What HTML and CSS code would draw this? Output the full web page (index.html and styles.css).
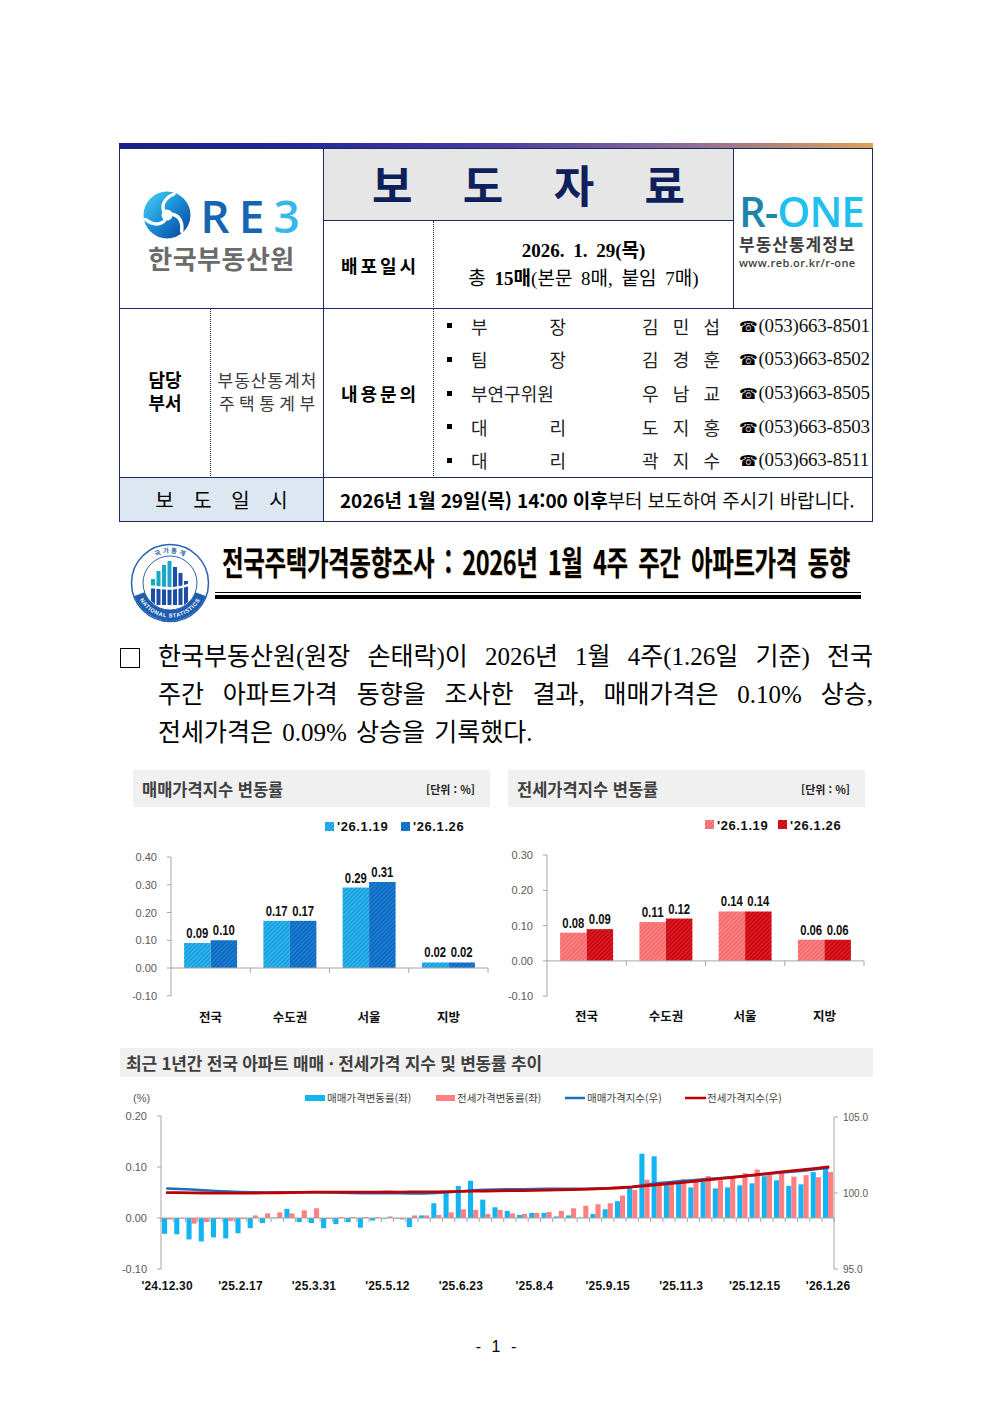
FILE: index.html
```html
<!DOCTYPE html>
<html lang="ko">
<head>
<meta charset="utf-8">
<title>보도자료 - 전국주택가격동향조사</title>
<link rel="stylesheet" href="styles.css">
</head>
<body>
<main class="page">

  <section class="release-head">
    <div class="head-bar"></div>
    <div class="head-grid">
      <div class="cell c-reb">
        <div class="reb-top">
          <svg class="reb-icon" viewBox="0 0 48 48" width="48" height="48" aria-hidden="true">
            <defs>
              <linearGradient id="reb-g" x1="0" y1="0" x2="1" y2="1">
                <stop offset="0" stop-color="#4fd3f4"/>
                <stop offset="0.45" stop-color="#1b93d8"/>
                <stop offset="1" stop-color="#0a3a94"/>
              </linearGradient>
            </defs>
            <circle cx="24" cy="24" r="23.5" fill="url(#reb-g)"/>
            <g fill="none" stroke="#fff" stroke-width="3.4" stroke-linecap="round">
              <path d="M24 24 C17 18 19 8 31 3"/>
              <path d="M24 24 C17 18 19 8 31 3" transform="rotate(120 24 24)"/>
              <path d="M24 24 C17 18 19 8 31 3" transform="rotate(240 24 24)"/>
            </g>
            <circle cx="24" cy="24" r="5.5" fill="#fff"/>
          </svg>
          <span class="reb-word"><span class="reb-dark">RE</span><span class="reb-light">3</span></span>
        </div>
        <div class="reb-name">한국부동산원</div>
      </div>

      <div class="cell c-title">보 도 자 료</div>

      <div class="cell c-rone">
        <div class="rone-word"><span class="rone-dark">R-</span><span class="rone-light">ONE</span></div>
        <div class="rone-name">부동산통계정보</div>
        <div class="rone-url">www.reb.or.kr/r-one</div>
      </div>

      <div class="cell c-label c-dist">배포일시</div>
      <div class="cell c-date">
        <div class="date-line"><b>2026. 1. 29(목)</b></div>
        <div class="date-line">총 <b>15매</b>(본문 8매, 붙임 7매)</div>
      </div>

      <div class="cell c-deptlabel">담당<br>부서</div>
      <div class="cell c-dept"><span class="dept1">부동산통계처</span><span class="dept2">주택통계부</span></div>
      <div class="cell c-label c-inq">내용문의</div>
      <div class="cell c-contacts">
        <div class="contact"><span class="dot"></span><span class="role">부 장</span><span class="name">김 민 섭</span><span class="phone"><span class="tel">☎</span>(053)663-8501</span></div>
        <div class="contact"><span class="dot"></span><span class="role">팀 장</span><span class="name">김 경 훈</span><span class="phone"><span class="tel">☎</span>(053)663-8502</span></div>
        <div class="contact"><span class="dot"></span><span class="role">부연구위원</span><span class="name">우 남 교</span><span class="phone"><span class="tel">☎</span>(053)663-8505</span></div>
        <div class="contact"><span class="dot"></span><span class="role">대 리</span><span class="name">도 지 홍</span><span class="phone"><span class="tel">☎</span>(053)663-8503</span></div>
        <div class="contact"><span class="dot"></span><span class="role">대 리</span><span class="name">곽 지 수</span><span class="phone"><span class="tel">☎</span>(053)663-8511</span></div>
      </div>

      <div class="cell c-rlabel">보 도 일 시</div>
      <div class="cell c-rtext"><b>2026년 1월 29일(목) 14:00 이후</b>부터 보도하여 주시기 바랍니다.</div>
    </div>
  </section>

  <section class="title-row">
    <svg class="emblem" viewBox="0 0 80 80" width="80" height="80" aria-hidden="true">
      <defs>
        <path id="em-top" d="M11.81 29.74 A30 30 0 0 1 68.19 29.74"/>
        <path id="em-bot" d="M6.68 48.93 A34.5 34.5 0 0 0 73.32 48.93"/>
        <clipPath id="em-clip"><circle cx="40" cy="40" r="26"/></clipPath>
      </defs>
      <circle cx="40" cy="40" r="38.5" fill="#fff" stroke="#2a64b0" stroke-width="1.5"/>
      <path d="M75.7 53 A38 38 0 0 1 4.3 53 L14.6 49.2 A27 27 0 0 0 65.4 49.2 Z" fill="#1f5db0"/>
      <circle cx="40" cy="40" r="27" fill="none" stroke="#2a64b0" stroke-width="1"/>
      <text class="em-ko"><textPath href="#em-top" startOffset="50%" text-anchor="middle">국 가 통 계</textPath></text>
      <text class="em-en"><textPath href="#em-bot" startOffset="50%" text-anchor="middle">NATIONAL STATISTICS</textPath></text>
      <g clip-path="url(#em-clip)">
        <g fill="#18a8c6">
          <rect x="21" y="36" width="4" height="10"/>
          <rect x="26.5" y="28" width="4" height="18"/>
          <rect x="32" y="22" width="4" height="24"/>
          <rect x="37.5" y="18" width="4" height="28"/>
        </g>
        <g fill="#1d4ea6">
          <rect x="21" y="46" width="4" height="16"/>
          <rect x="26.5" y="46" width="4" height="16"/>
          <rect x="32" y="46" width="4" height="16"/>
          <rect x="37.5" y="46" width="4" height="16"/>
          <rect x="43" y="24" width="4" height="38"/>
          <rect x="48.5" y="30" width="4" height="32"/>
          <rect x="54" y="38" width="4" height="24"/>
        </g>
        <path d="M12 46 C24 38 34 54 68 38" fill="none" stroke="#fff" stroke-width="2.6"/>
      </g>
    </svg>
    <div class="title-col">
      <h1 class="title-text">전국주택가격동향조사 : 2026년 1월 4주 주간 아파트가격 동향</h1>
      <div class="rule-thin"></div>
      <div class="rule-thick"></div>
    </div>
  </section>

  <section class="lead">
    <span class="lead-box"></span>
    <p class="lead-text">
      <span class="ln">한국부동산원(원장 손태락)이 2026년 1월 4주(1.26일 기준) 전국</span>
      <span class="ln">주간 아파트가격 동향을 조사한 결과, 매매가격은 0.10% 상승,</span>
      <span class="ln last">전세가격은 0.09% 상승을 기록했다.</span>
    </p>
  </section>

  <section class="charts">
    <figure class="chart">
      <div class="chart-head"><span class="chart-title">매매가격지수 변동률</span><span class="chart-unit">[단위 : %]</span></div>
      <svg class="chart-plot" viewBox="0 0 357 225" width="357" height="225">
        <defs>
          <pattern id="h-sa" width="3" height="3" patternUnits="userSpaceOnUse" patternTransform="rotate(45)">
            <rect width="3" height="3" fill="#16a2e0"/><rect width="1" height="3" fill="#3fb8ec"/>
          </pattern>
          <pattern id="h-sb" width="3" height="3" patternUnits="userSpaceOnUse" patternTransform="rotate(45)">
            <rect width="3" height="3" fill="#0b6bc3"/><rect width="1" height="3" fill="#2a83d4"/>
          </pattern>
        </defs>
        <rect x="192" y="15" width="9" height="9" fill="url(#h-sa)"/>
        <text class="lg" x="204" y="24">'26.1.19</text>
        <rect x="268" y="15" width="9" height="9" fill="url(#h-sb)"/>
        <text class="lg" x="280" y="24">'26.1.26</text>

        <g class="yl">
          <text x="24" y="54">0.40</text>
          <text x="24" y="81.75">0.30</text>
          <text x="24" y="109.5">0.20</text>
          <text x="24" y="137.25">0.10</text>
          <text x="24" y="165">0.00</text>
          <text x="24" y="192.75">-0.10</text>
        </g>
        <g class="ax">
          <line x1="38" y1="50" x2="38" y2="189"/>
          <line x1="34" y1="50" x2="38" y2="50"/>
          <line x1="34" y1="77.75" x2="38" y2="77.75"/>
          <line x1="34" y1="105.5" x2="38" y2="105.5"/>
          <line x1="34" y1="133.25" x2="38" y2="133.25"/>
          <line x1="34" y1="161" x2="38" y2="161"/>
          <line x1="34" y1="188.75" x2="38" y2="188.75"/>
        </g>

        <rect x="51.1" y="136.02" width="26.5" height="24.98" fill="url(#h-sa)"/>
        <rect x="77.6" y="133.25" width="26.5" height="27.75" fill="url(#h-sb)"/>
        <rect x="130.4" y="113.83" width="26.5" height="47.17" fill="url(#h-sa)"/>
        <rect x="156.9" y="113.83" width="26.5" height="47.17" fill="url(#h-sb)"/>
        <rect x="209.6" y="80.53" width="26.5" height="80.47" fill="url(#h-sa)"/>
        <rect x="236.1" y="74.98" width="26.5" height="86.02" fill="url(#h-sb)"/>
        <rect x="288.9" y="155.45" width="26.5" height="5.55" fill="url(#h-sa)"/>
        <rect x="315.4" y="155.45" width="26.5" height="5.55" fill="url(#h-sb)"/>

        <g class="ax">
          <line x1="38" y1="161" x2="355" y2="161"/>
          <line x1="117.25" y1="161" x2="117.25" y2="166"/>
          <line x1="196.5" y1="161" x2="196.5" y2="166"/>
          <line x1="275.75" y1="161" x2="275.75" y2="166"/>
          <line x1="355" y1="161" x2="355" y2="166"/>
        </g>

        <g class="vl">
          <text x="64.35" y="131" textLength="22" lengthAdjust="spacingAndGlyphs">0.09</text>
          <text x="90.85" y="128.25" textLength="22" lengthAdjust="spacingAndGlyphs">0.10</text>
          <text x="143.65" y="108.8" textLength="22" lengthAdjust="spacingAndGlyphs">0.17</text>
          <text x="170.15" y="108.8" textLength="22" lengthAdjust="spacingAndGlyphs">0.17</text>
          <text x="222.85" y="75.5" textLength="22" lengthAdjust="spacingAndGlyphs">0.29</text>
          <text x="249.35" y="70" textLength="22" lengthAdjust="spacingAndGlyphs">0.31</text>
          <text x="302.15" y="150.45" textLength="22" lengthAdjust="spacingAndGlyphs">0.02</text>
          <text x="328.65" y="150.45" textLength="22" lengthAdjust="spacingAndGlyphs">0.02</text>
        </g>
        <g class="cl">
          <text x="77.6" y="215">전국</text>
          <text x="156.9" y="215">수도권</text>
          <text x="236.1" y="215">서울</text>
          <text x="315.4" y="215">지방</text>
        </g>
      </svg>
    </figure>

    <figure class="chart">
      <div class="chart-head"><span class="chart-title">전세가격지수 변동률</span><span class="chart-unit">[단위 : %]</span></div>
      <svg class="chart-plot" viewBox="0 0 357 225" width="357" height="225">
        <defs>
          <pattern id="h-ja" width="3" height="3" patternUnits="userSpaceOnUse" patternTransform="rotate(45)">
            <rect width="3" height="3" fill="#f5696b"/><rect width="1" height="3" fill="#fb8f90"/>
          </pattern>
          <pattern id="h-jb" width="3" height="3" patternUnits="userSpaceOnUse" patternTransform="rotate(45)">
            <rect width="3" height="3" fill="#cc0610"/><rect width="1" height="3" fill="#dc2a30"/>
          </pattern>
        </defs>
        <rect x="197" y="13" width="9" height="9" fill="url(#h-ja)"/>
        <text class="lg" x="209" y="23">'26.1.19</text>
        <rect x="270" y="13" width="9" height="9" fill="url(#h-jb)"/>
        <text class="lg" x="282" y="23">'26.1.26</text>

        <g class="yl">
          <text x="25" y="52">0.30</text>
          <text x="25" y="87.3">0.20</text>
          <text x="25" y="122.6">0.10</text>
          <text x="25" y="157.9">0.00</text>
          <text x="25" y="193.2">-0.10</text>
        </g>
        <g class="ax">
          <line x1="39" y1="48" x2="39" y2="189.2"/>
          <line x1="35" y1="48" x2="39" y2="48"/>
          <line x1="35" y1="83.3" x2="39" y2="83.3"/>
          <line x1="35" y1="118.6" x2="39" y2="118.6"/>
          <line x1="35" y1="153.9" x2="39" y2="153.9"/>
          <line x1="35" y1="189.2" x2="39" y2="189.2"/>
        </g>

        <rect x="52.1" y="125.66" width="26.5" height="28.24" fill="url(#h-ja)"/>
        <rect x="78.6" y="122.13" width="26.5" height="31.77" fill="url(#h-jb)"/>
        <rect x="131.4" y="115.07" width="26.5" height="38.83" fill="url(#h-ja)"/>
        <rect x="157.9" y="111.54" width="26.5" height="42.36" fill="url(#h-jb)"/>
        <rect x="210.6" y="104.48" width="26.5" height="49.42" fill="url(#h-ja)"/>
        <rect x="237.1" y="104.48" width="26.5" height="49.42" fill="url(#h-jb)"/>
        <rect x="289.9" y="132.72" width="26.5" height="21.18" fill="url(#h-ja)"/>
        <rect x="316.4" y="132.72" width="26.5" height="21.18" fill="url(#h-jb)"/>

        <g class="ax">
          <line x1="39" y1="153.9" x2="356" y2="153.9"/>
          <line x1="118.25" y1="153.9" x2="118.25" y2="158.9"/>
          <line x1="197.5" y1="153.9" x2="197.5" y2="158.9"/>
          <line x1="276.75" y1="153.9" x2="276.75" y2="158.9"/>
          <line x1="356" y1="153.9" x2="356" y2="158.9"/>
        </g>

        <g class="vl">
          <text x="65.35" y="120.66" textLength="22" lengthAdjust="spacingAndGlyphs">0.08</text>
          <text x="91.85" y="117.13" textLength="22" lengthAdjust="spacingAndGlyphs">0.09</text>
          <text x="144.65" y="110.07" textLength="22" lengthAdjust="spacingAndGlyphs">0.11</text>
          <text x="171.15" y="106.54" textLength="22" lengthAdjust="spacingAndGlyphs">0.12</text>
          <text x="223.85" y="99.48" textLength="22" lengthAdjust="spacingAndGlyphs">0.14</text>
          <text x="250.35" y="99.48" textLength="22" lengthAdjust="spacingAndGlyphs">0.14</text>
          <text x="303.15" y="127.72" textLength="22" lengthAdjust="spacingAndGlyphs">0.06</text>
          <text x="329.65" y="127.72" textLength="22" lengthAdjust="spacingAndGlyphs">0.06</text>
        </g>
        <g class="cl">
          <text x="78.6" y="214">전국</text>
          <text x="157.9" y="214">수도권</text>
          <text x="237.1" y="214">서울</text>
          <text x="316.4" y="214">지방</text>
        </g>
      </svg>
    </figure>
  </section>

  <section class="trend">
    <div class="trend-head">최근 1년간 전국 아파트 매매 · 전세가격 지수 및 변동률 추이</div>
    <svg id="trend-plot" class="trend-plot" viewBox="0 0 753 223" width="753" height="223">
      <g class="tl">
        <rect x="185" y="18" width="20" height="6" fill="#12b4f2"/>
        <text x="207" y="25">매매가격변동률(좌)</text>
        <rect x="316" y="18" width="19" height="6" fill="#ff7f82"/>
        <text x="337" y="25">전세가격변동률(좌)</text>
        <line x1="445" y1="21" x2="465" y2="21" stroke="#1a6fc0" stroke-width="2.5"/>
        <text x="467" y="25">매매가격지수(우)</text>
        <line x1="565" y1="21" x2="586" y2="21" stroke="#c00000" stroke-width="2.5"/>
        <text x="587" y="25">전세가격지수(우)</text>
      </g>
      <text class="tyl-l" x="13" y="25">(%)</text>
      <g class="tyl-l end">
        <text x="27" y="43">0.20</text>
        <text x="27" y="94">0.10</text>
        <text x="27" y="145">0.00</text>
        <text x="27" y="196">-0.10</text>
      </g>
      <g class="tyl-r">
        <text x="723" y="44">105.0</text>
        <text x="723" y="120">100.0</text>
        <text x="723" y="196">95.0</text>
      </g>
      <g class="ax">
        <line x1="41" y1="39" x2="41" y2="192"/>
        <line x1="37" y1="39" x2="41" y2="39"/>
        <line x1="37" y1="90" x2="41" y2="90"/>
        <line x1="37" y1="141" x2="41" y2="141"/>
        <line x1="37" y1="192" x2="41" y2="192"/>
        <line x1="714" y1="40" x2="714" y2="192"/>
        <line x1="714" y1="40" x2="718" y2="40"/>
        <line x1="714" y1="116" x2="718" y2="116"/>
        <line x1="714" y1="192" x2="718" y2="192"/>
      </g>
      <g class="t-bars"></g>
      <g class="ax t-ticks"></g>
      <g class="t-lines"></g>
      <g class="txl">
        <text x="47.12" y="213">'24.12.30</text>
        <text x="120.56" y="213">'25.2.17</text>
        <text x="194" y="213">'25.3.31</text>
        <text x="267.44" y="213">'25.5.12</text>
        <text x="340.88" y="213">'25.6.23</text>
        <text x="414.32" y="213">'25.8.4</text>
        <text x="487.76" y="213">'25.9.15</text>
        <text x="561.2" y="213">'25.11.3</text>
        <text x="634.64" y="213">'25.12.15</text>
        <text x="708.08" y="213">'26.1.26</text>
      </g>
    </svg>
  </section>

  <footer class="pageno">- 1 -</footer>
</main>
<script src="script.js"></script>
</body>
</html>
```

FILE: styles.css
```css
* { box-sizing: border-box; margin: 0; padding: 0; }
html, body { background: #fff; }
body { font-family: "Noto Sans CJK KR", sans-serif; color: #000; }

.page { width: 992px; padding: 143px 0 40px 119px; }

/* ---------- header table ---------- */
.release-head { width: 754px; }
.head-bar {
  height: 5px;
  background: linear-gradient(90deg, #1b1d8c 0%, #26289a 25%, #4b3b9f 50%, #8c6c97 75%, #d9a25a 100%);
}
.head-grid {
  display: grid;
  grid-template-columns: 91px 113px 110px 300px 138px;
  grid-template-rows: 72px 88px 169px 43px;
  border: 1px solid #1c2a5c;
}
.cell {
  border-right: 1px solid #1c2a5c;
  border-bottom: 1px solid #1c2a5c;
  display: flex;
  align-items: center;
  justify-content: center;
  font-family: "Liberation Serif", "Noto Sans CJK KR", serif;
}
.c-reb { grid-column: 1 / 3; grid-row: 1 / 3; flex-direction: column; padding-top: 6px; }
.c-title {
  grid-column: 3 / 5; grid-row: 1;
  background: #e6e6e6;
  font-family: "Noto Sans CJK KR", sans-serif;
  font-weight: 700;
  font-size: 44px;
  line-height: 1;
  color: #0e1f5b;
  letter-spacing: 19px;
  padding-left: 19px;
  padding-bottom: 2px;
}
.c-rone {
  grid-column: 5; grid-row: 1 / 3; border-right: 0;
  flex-direction: column;
  align-items: flex-start;
  justify-content: flex-start;
  padding: 40px 0 0 5px;
}
.c-dist { grid-column: 3; grid-row: 2; border-right-style: dotted; }
.c-date { grid-column: 4; grid-row: 2; flex-direction: column; }
.c-deptlabel { grid-column: 1; grid-row: 3; border-right-style: dotted; font-weight: 700; font-size: 18px; line-height: 23px; text-align: center; }
.c-dept { grid-column: 2; grid-row: 3; flex-direction: column; font-size: 17px; line-height: 23px; color: #3a3a3a; }
.c-inq { grid-column: 3; grid-row: 3; border-right-style: dotted; }
.c-contacts { grid-column: 4 / 6; grid-row: 3; border-right: 0; flex-direction: column; align-items: stretch; }
.c-rlabel {
  grid-column: 1 / 3; grid-row: 4; border-bottom: 0;
  background: #dde7f2;
  font-family: "Noto Sans CJK KR", sans-serif;
  font-size: 20px;
  letter-spacing: 7px;
  padding-left: 7px;
}
.c-rtext {
  grid-column: 3 / 6; grid-row: 4; border: 0;
  justify-content: flex-start;
  padding-left: 16px;
  font-family: "Noto Sans CJK KR", sans-serif;
  font-size: 19px;
  letter-spacing: -0.1px;
  color: #111;
  white-space: nowrap;
}
.c-rtext b { font-weight: 700; color: #000; }

/* REB logo */
.reb-top { display: flex; align-items: center; gap: 9px; }
.reb-icon { display: block; }
.reb-word {
  font-family: "Open Sans", sans-serif;
  font-weight: 600;
  font-size: 46px;
  line-height: 1;
  letter-spacing: 9px;
  margin-right: -9px;
}
.reb-dark { color: #1565b3; }
.reb-light { color: #38b7ea; }
.reb-name {
  margin-top: 4px;
  font-family: "Noto Sans CJK KR", sans-serif;
  font-weight: 700;
  font-size: 26px;
  line-height: 30px;
  color: #6b6b6b;
  letter-spacing: 0.5px;
}

/* R-ONE logo */
.rone-word {
  font-family: "Open Sans", sans-serif;
  font-weight: 600;
  font-size: 42px;
  line-height: 44px;
  letter-spacing: -1px;
}
.rone-dark { color: #1c85a8; }
.rone-light { color: #1dc0ee; }
.rone-name {
  font-family: "Noto Sans CJK KR", sans-serif;
  font-weight: 700;
  font-size: 17px;
  line-height: 22px;
  color: #3d3d3d;
  letter-spacing: 1px;
}
.rone-url {
  font-family: "Open Sans", sans-serif;
  font-weight: 600;
  font-size: 11px;
  line-height: 16px;
  color: #3d3d3d;
  letter-spacing: 0.4px;
}

/* label cells */
.c-label { font-weight: 700; font-size: 18px; letter-spacing: 3px; padding-left: 3px; }

.date-line { font-size: 19px; line-height: 28px; word-spacing: 4px; }
.date-line b { font-weight: 700; }

.dept1, .dept2 { display: block; }
.dept1 { letter-spacing: 1px; padding-left: 1px; }
.dept2 { letter-spacing: 4.5px; padding-left: 4.5px; }

/* contacts */
.contact {
  flex: 1;
  display: flex;
  align-items: center;
  padding-left: 13px;
  font-size: 18px;
  color: #222;
}
.dot { width: 5px; height: 5px; background: #000; flex: none; }
.role { width: 95px; margin-left: 19px; text-align: justify; text-align-last: justify; }
.name { width: 78px; margin-left: 76px; text-align: justify; text-align-last: justify; }
.phone { margin-left: 19px; font-size: 19px; letter-spacing: -0.2px; white-space: nowrap; color: #111; }
.tel { font-family: "DejaVu Sans", sans-serif; font-size: 15px; margin-right: 1px; color: #000; }

/* ---------- title ---------- */
.title-row { display: flex; margin-top: 21px; height: 80px; }
.emblem { display: block; margin-left: 11px; flex: none; }
.em-ko { font-family: "Noto Sans CJK KR", sans-serif; font-size: 6.5px; font-weight: 700; fill: #2a64b0; }
.em-en { font-family: "Liberation Sans", sans-serif; font-size: 5.6px; font-weight: 700; fill: #fff; letter-spacing: 0.6px; }
.title-col { margin-left: 5px; width: 646px; }
.title-text {
  margin-top: -2px;
  padding-left: 10px;
  font-family: "Noto Sans CJK KR", sans-serif;
  font-weight: 700;
  font-size: 33px;
  line-height: 40px;
  white-space: nowrap;
  word-spacing: 6px;
  letter-spacing: -0.5px;
  color: #000;
  transform: scaleX(0.71);
  transform-origin: left center;
  text-shadow: 1px 1px 0 rgba(214, 160, 70, 0.55);
}
.rule-thin { margin-top: 11px; height: 1px; background: #000; }
.rule-thick { margin-top: 2px; height: 4px; background: #000; }

/* ---------- lead paragraph ---------- */
.lead { display: flex; margin-top: 15px; }
.lead-box { flex: none; width: 20px; height: 20px; border: 1.5px solid #000; margin: 10px 18px 0 1px; }
.lead-text {
  width: 715px;
  font-family: "Liberation Serif", "Noto Sans CJK KR", serif;
  font-size: 25px;
  line-height: 38px;
  color: #000;
}
.ln { display: block; text-align: justify; text-align-last: justify; white-space: nowrap; }
.ln.last { text-align-last: left; word-spacing: 3px; }

/* ---------- two bar charts ---------- */
.charts { display: flex; gap: 18px; margin-top: 18px; padding-left: 14px; }
.chart { width: 357px; }
.chart-head {
  height: 37px;
  background: #f0f0f0;
  display: flex;
  align-items: center;
  justify-content: space-between;
  padding: 0 15px 0 9px;
}
.chart-title { font-weight: 700; font-size: 16.5px; color: #404040; }
.chart-unit { font-weight: 700; font-size: 11px; color: #222; }
.chart-plot { display: block; }
.lg { font-family: "Liberation Sans", sans-serif; font-weight: 700; font-size: 13px; letter-spacing: 0.6px; fill: #111; }
.yl text { font-family: "Liberation Sans", sans-serif; font-size: 11px; fill: #595959; text-anchor: end; }
.ax line { stroke: #a6a6a6; stroke-width: 1; }
.vl text { font-family: "Liberation Sans", sans-serif; font-weight: 700; font-size: 14px; fill: #111; text-anchor: middle; }
.cl text { font-family: "Noto Sans CJK KR", sans-serif; font-weight: 700; font-size: 12.5px; fill: #111; text-anchor: middle; }

/* ---------- trend chart ---------- */
.trend { margin-top: 16px; width: 753px; margin-left: 1px; }
.trend-head {
  height: 29px;
  background: #f0f0f0;
  display: flex;
  align-items: center;
  padding-left: 6px;
  font-weight: 700;
  font-size: 17px;
  letter-spacing: -0.2px;
  color: #404040;
}
.trend-plot { display: block; }
.tl text { font-family: "Noto Sans CJK KR", sans-serif; font-size: 10.5px; fill: #404040; }
.tyl-l, .tyl-l text, .tyl-r text { font-family: "Liberation Sans", sans-serif; font-size: 11px; fill: #595959; }
.tyl-r text { font-size: 10px; }
.tyl-l.end text { text-anchor: end; }
.txl text { font-family: "Liberation Sans", sans-serif; font-weight: 700; font-size: 12px; fill: #111; text-anchor: middle; letter-spacing: 0.2px; }

/* ---------- page number ---------- */
.pageno {
  margin-top: 37px;
  width: 754px;
  text-align: center;
  font-family: "Liberation Sans", sans-serif;
  font-size: 16px;
  line-height: 20px;
  word-spacing: 6px;
}
```

FILE: script.js
```js
(function () {
  var NS = 'http://www.w3.org/2000/svg';
  var sale = [-0.031, -0.032, -0.042, -0.046, -0.038, -0.040, -0.030, -0.020, -0.010, 0.001,
    0.018, -0.008, -0.010, -0.020, -0.012, -0.008, -0.019, -0.005, -0.001, -0.001,
    -0.018, 0.005, 0.029, 0.051, 0.063, 0.073, 0.036, 0.021, 0.014, 0.006,
    0.010, 0.010, 0.003, 0.005, 0.001, 0.008, 0.017, 0.033, 0.059, 0.126,
    0.121, 0.066, 0.068, 0.060, 0.071, 0.058, 0.060, 0.064, 0.068, 0.082,
    0.074, 0.063, 0.066, 0.090, 0.100];
  var jeonse = [-0.003, -0.001, -0.011, -0.008, -0.002, -0.006, -0.002, 0.005, 0.009, 0.011,
    0.009, 0.015, 0.019, -0.002, 0.002, 0.002, 0.002, 0.002, 0.003, -0.003,
    0.005, 0.005, 0.006, 0.011, 0.017, 0.016, 0.008, 0.016, 0.009, 0.008,
    0.010, 0.012, 0.014, 0.019, 0.024, 0.027, 0.029, 0.044, 0.055, 0.075,
    0.066, 0.071, 0.076, 0.077, 0.082, 0.074, 0.081, 0.088, 0.095, 0.085,
    0.092, 0.081, 0.084, 0.080, 0.090];

  var svg = document.getElementById('trend-plot');
  if (!svg) return;
  var x0 = 41, step = 12.24, zeroY = 141, rateScale = 510, idxY = 116, idxScale = 15.2;

  function mk(tag, attrs) {
    var e = document.createElementNS(NS, tag);
    for (var k in attrs) e.setAttribute(k, attrs[k]);
    return e;
  }

  var bars = svg.querySelector('.t-bars');
  var ticks = svg.querySelector('.t-ticks');
  var lines = svg.querySelector('.t-lines');

  var sIdx = 100.30, jIdx = 100.02, sPts = [], jPts = [];
  for (var i = 0; i < sale.length; i++) {
    var left = x0 + step * i;
    var cx = left + step / 2;
    var pairs = [[sale[i], left + 1, '#12b4f2'], [jeonse[i], left + 6.1, '#ff7f82']];
    for (var p = 0; p < pairs.length; p++) {
      var v = pairs[p][0];
      var h = Math.max(Math.abs(v) * rateScale, 0.6);
      var y = v >= 0 ? zeroY - h : zeroY;
      bars.appendChild(mk('rect', {
        x: pairs[p][1].toFixed(2), y: y.toFixed(2),
        width: 5.1, height: h.toFixed(2), fill: pairs[p][2]
      }));
    }
    if (i > 0) {
      sIdx *= 1 + sale[i] / 100;
      jIdx *= 1 + jeonse[i] / 100;
    }
    sPts.push(cx.toFixed(2) + ',' + (idxY - (sIdx - 100) * idxScale).toFixed(2));
    jPts.push(cx.toFixed(2) + ',' + (idxY - (jIdx - 100) * idxScale).toFixed(2));
  }

  ticks.appendChild(mk('line', { x1: x0, y1: zeroY, x2: 714, y2: zeroY }));
  for (var k = 0; k <= sale.length; k++) {
    var tx = (x0 + step * k).toFixed(2);
    ticks.appendChild(mk('line', { x1: tx, y1: zeroY, x2: tx, y2: zeroY + 4 }));
  }

  lines.appendChild(mk('polyline', {
    points: sPts.join(' '), fill: 'none', stroke: '#1a6fc0',
    'stroke-width': 2.4, 'stroke-linejoin': 'round', 'stroke-linecap': 'round'
  }));
  lines.appendChild(mk('polyline', {
    points: jPts.join(' '), fill: 'none', stroke: '#c00000',
    'stroke-width': 2.8, 'stroke-linejoin': 'round', 'stroke-linecap': 'round'
  }));
})();
```
